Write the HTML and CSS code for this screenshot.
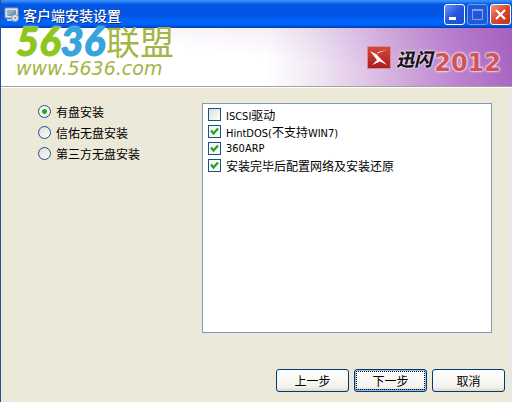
FILE: index.html
```html
<!DOCTYPE html>
<html lang="zh-CN">
<head>
    <meta charset="UTF-8">
    <meta name="viewport" content="width=device-width, initial-scale=1.0">
    <title>客户端安装设置</title>
    <link rel="stylesheet" href="styles.css">
</head>
<body>
    <div class="window">
        <div class="titlebar">
            <svg class="app-icon" width="16" height="16" viewBox="0 0 16 16">
                <rect x="1" y="1" width="13" height="10" rx="1" fill="#e4e6e2" stroke="#8d98a8"/>
                <rect x="3" y="3" width="9" height="6" fill="#8db4cf"/>
                <path d="M3 9L12 3V9Z" fill="#6e99bb"/>
                <path d="M3 13H8" stroke="#c5ccd4" stroke-width="2"/>
                <circle cx="11" cy="11" r="3.5" fill="#dbe2e8" stroke="#8795a5"/>
                <circle cx="11" cy="11" r="1" fill="#7288a0"/>
            </svg>
            <h1>客户端安装设置</h1>
            <div class="window-buttons">
                <button class="win-btn" type="button" aria-label="最小化">
                    <svg width="19" height="19" viewBox="0 0 19 19"><path d="M4 13.5H11" stroke="#fff" stroke-width="3"/></svg>
                </button>
                <button class="win-btn win-max" type="button" aria-label="最大化" disabled>
                    <svg width="19" height="19" viewBox="0 0 19 19"><path d="M4.5 5V14.5H14.5V5" fill="none" stroke="#7da2f2"/><path d="M4 5H15" stroke="#7da2f2" stroke-width="2"/></svg>
                </button>
                <button class="win-btn win-close" type="button" aria-label="关闭">
                    <svg width="19" height="19" viewBox="0 0 19 19"><path d="M5 5L14 14M14 5L5 14" stroke="#fff" stroke-width="2.2"/></svg>
                </button>
            </div>
        </div>

        <div class="banner">
            <svg class="brand-icon" width="24" height="23" viewBox="0 0 24 23">
                <defs>
                    <linearGradient id="red" x1="0" y1="0" x2="0" y2="1">
                        <stop offset="0" stop-color="#d8483c"/>
                        <stop offset="1" stop-color="#a81c20"/>
                    </linearGradient>
                </defs>
                <rect x=".5" y=".5" width="23" height="22" fill="url(#red)" stroke="#e08a90"/>
                <path d="M20 4L11 7L10 10L16 15L20 19L12 15L9 12L11 6Z" fill="#fff"/>
                <path d="M3 5L9 8L14 13L12 16L5 19L10 14Z" fill="#fff"/>
            </svg>
            <span class="brand-name">迅闪</span>
            <span class="brand-year">2012</span>
        </div>

        <div class="watermark">
            <div class="mark-top">
                <span class="mark-number"><span class="mark-green">56</span><span class="mark-blue">36</span></span>
                <span class="mark-cn">联盟</span>
            </div>
            <div class="mark-url">www.5636.com</div>
        </div>

        <form class="content">
            <div class="options">
                <div class="modes">
                    <label><input type="radio" name="mode" checked>有盘安装</label>
                    <label><input type="radio" name="mode">信佑无盘安装</label>
                    <label><input type="radio" name="mode">第三方无盘安装</label>
                </div>
                <div class="components">
                    <label><input type="checkbox"><span><span class="latin">ISCSI</span>驱动</span></label>
                    <label><input type="checkbox" checked><span><span class="latin">HintDOS(</span>不支持<span class="latin">WIN7)</span></span></label>
                    <label><input type="checkbox" checked><span class="latin">360ARP</span></label>
                    <label><input type="checkbox" checked><span>安装完毕后配置网络及安装还原</span></label>
                </div>
            </div>
            <div class="actions">
                <button class="btn" type="button">上一步</button>
                <button class="btn btn-default" type="button"><span>下一步</span></button>
                <button class="btn" type="button">取消</button>
            </div>
        </form>
    </div>
</body>
</html>
```
FILE: styles.css
```css
* { margin: 0; padding: 0; box-sizing: border-box; }
body {
    font-family: "Noto Sans CJK SC", sans-serif;
    font-size: 12px;
    color: #000;
}
.window {
    position: relative;
    display: flex;
    flex-direction: column;
    min-height: 100vh;
    background: #ece9d8;
    border-left: 1px solid #24509c;
}

/* title bar */
.titlebar {
    display: flex;
    align-items: center;
    gap: 3px;
    height: 28px;
    padding: 1px 1px 0 3px;
    background: linear-gradient(#3d95ff 0, #2a80f4 2px, #0458e4 4px, #0053e1 14px, #0066ff 22px, #0060f5 25px, #003dab 28px);
}
.titlebar h1 {
    flex: 1;
    font-size: 14px;
    line-height: 16px;
    font-weight: 500;
    color: #fff;
    text-shadow: 1px 1px 0 #0a2f86;
}
.window-buttons {
    display: flex;
    gap: 2px;
}
.win-btn {
    width: 21px;
    height: 21px;
    border: 1px solid #fff;
    border-radius: 3px;
    background: linear-gradient(135deg, #6f97f4, #2458dc 50%, #1c4cce);
}
.win-btn svg { display: block; }
.win-max {
    border-color: #6f9cf4;
    background: #2058d8;
}
.win-close { background: linear-gradient(135deg, #ee9880, #d8482a 50%, #b83a1e); }

/* banner */
.banner {
    display: flex;
    align-items: center;
    justify-content: flex-end;
    height: 60px;
    padding-right: 11px;
    border-bottom: 1px solid #fff;
    box-shadow: inset 0 -1px 0 #a5a194;
    background:
        linear-gradient(to bottom left, rgba(130, 50, 170, .15), rgba(255, 255, 255, 0) 50%),
        linear-gradient(90deg, #fff 0, #fff 52%, #f0e6f3 62%, #e0c6e8 71%, #cda5da 80%, #bd84d0 89%, #aa68c2 100%);
}
.brand-name {
    margin-left: 5px;
    font-size: 18px;
    font-weight: 900;
    font-style: italic;
    line-height: 20px;
    color: #1c1420;
    text-shadow: 0 0 2px #fff, 0 0 2px #fff;
}
.brand-year {
    margin-left: 2px;
    padding-top: 10px;
    font-family: "DejaVu Sans", sans-serif;
    font-size: 24px;
    font-weight: bold;
    line-height: 24px;
    color: #d25358;
    text-shadow: 0 0 1px #fff, 0 0 2px #fff, 0 0 3px #fff;
}

/* site mark laid over the title bar and banner */
.watermark {
    position: absolute;
    top: 23px;
    left: 15px;
    white-space: nowrap;
    color: #a4b545;
}
.mark-top {
    display: flex;
    align-items: center;
    gap: 1px;
    height: 36px;
}
.mark-number {
    font-family: Lato, sans-serif;
    font-size: 40px;
    font-weight: 900;
    font-style: italic;
    line-height: 36px;
    text-shadow: 0 0 1px #fff, 0 0 2px #fff, 0 0 3px #fff;
    -webkit-text-stroke: 1px;
}
.mark-green { color: #8fc61e; }
.mark-blue { color: #35a3dd; }
.mark-cn {
    font-size: 34px;
    line-height: 36px;
}
.mark-url {
    font-family: "DejaVu Sans", sans-serif;
    font-size: 19px;
    font-style: italic;
    line-height: 18px;
}

/* form */
.content {
    flex: 1;
    display: flex;
    flex-direction: column;
    justify-content: space-between;
    gap: 36px;
    padding: 15px 5px 10px 37px;
    border-right: 2px solid #e4e8ee;
}
.options {
    flex: 1;
    display: grid;
    grid-template-columns: 164px 1fr;
    padding-right: 13px;
}
.modes label,
.components label {
    display: flex;
    align-items: center;
    gap: 5px;
    white-space: nowrap;
}
.modes label { height: 21px; }
.modes { margin-top: -2px; }
.components {
    padding: 2px 5px;
    background: #fff;
    border: 1px solid #7f9db9;
}
.components label { height: 17px; }
.latin {
    font-family: "DejaVu Sans Condensed", "DejaVu Sans", sans-serif;
    font-size: 11px;
}
input {
    appearance: none;
    flex: none;
    width: 13px;
    height: 13px;
    border: 1px solid #1c5180;
    background: linear-gradient(135deg, #dcdcd7, #fff);
}
input[type="radio"] { border-radius: 50%; }
input[type="radio"]:checked {
    background: radial-gradient(circle, #2ea42e 0, #2ea42e 2px, #f4f6f2 3px);
}
input[type="checkbox"]:checked {
    background: #f6f8f5 url("data:image/svg+xml,%3Csvg xmlns='http://www.w3.org/2000/svg' viewBox='0 0 11 11'%3E%3Cpath d='M2 4.5L4.5 7.5L9 2.5' fill='none' stroke='%2321a121' stroke-width='2.2'/%3E%3C/svg%3E");
}

/* buttons */
.actions {
    display: flex;
    justify-content: flex-end;
    gap: 5px;
}
.btn {
    width: 73px;
    height: 23px;
    font-family: inherit;
    font-size: 12px;
    line-height: 17px;
    color: #000;
    border: 1px solid #003c74;
    border-radius: 3px;
    background: linear-gradient(#fff, #f3f2ec 80%, #dcd8cc);
}
.btn-default {
    padding: 1px;
    box-shadow: inset 0 0 0 1px #9db9eb, inset 0 -2px 0 #6f8fd4;
}
.btn-default span {
    display: block;
    border: 1px dotted #000;
}
```
